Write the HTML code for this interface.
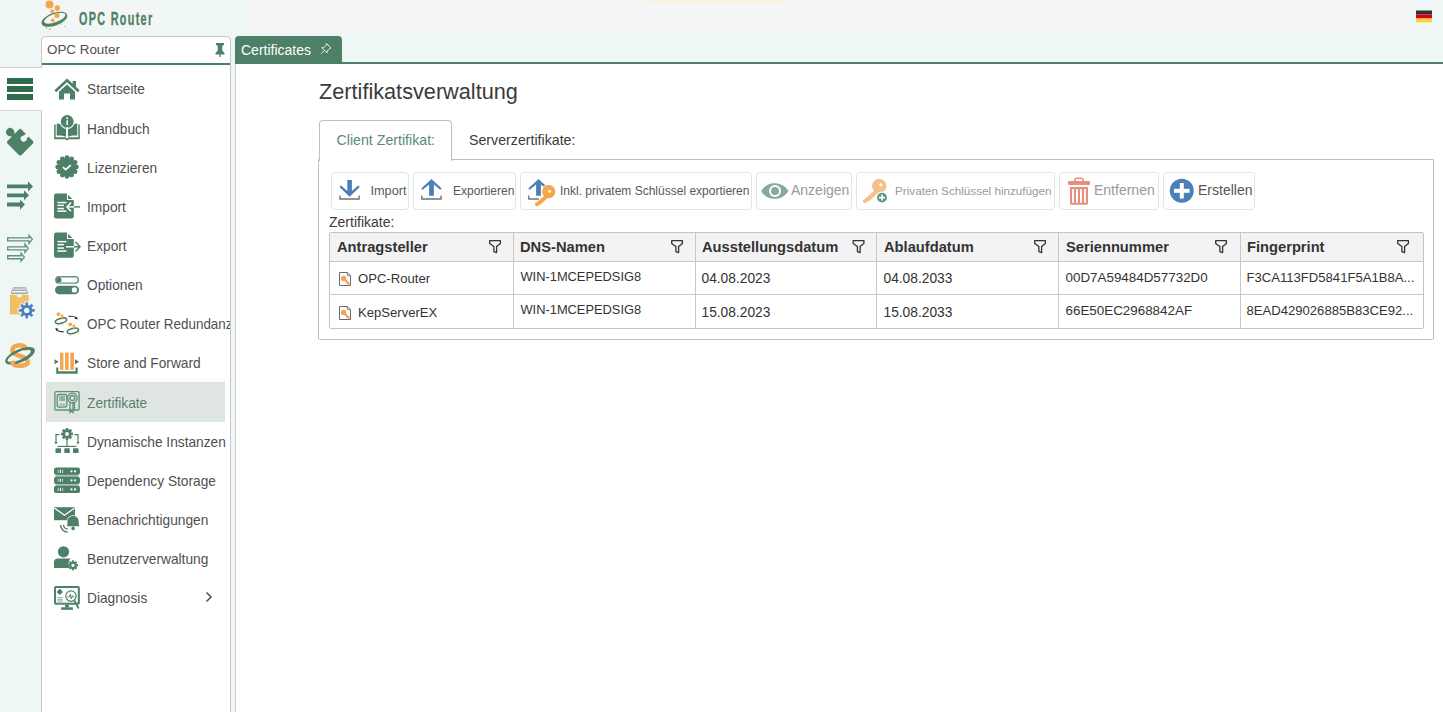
<!DOCTYPE html>
<html><head><meta charset="utf-8">
<style>
*{box-sizing:border-box;margin:0;padding:0}
html,body{width:1443px;height:712px;overflow:hidden;background:#fff;font-family:"Liberation Sans",sans-serif;position:relative}
.a{position:absolute}
.t{position:absolute;white-space:nowrap;line-height:1}
.mi{position:absolute;left:45px;font-size:15px;color:#505050;white-space:nowrap;line-height:1;transform:scaleX(0.915);transform-origin:0 0}
.btn{position:absolute;top:172px;height:38px;border:1px solid #dde7e4;border-radius:4px;background:#fff}
.bt{position:absolute;white-space:nowrap;line-height:1;color:#585858;top:185px;font-size:12px}
.hd{position:absolute;top:240px;font-weight:bold;font-size:14.7px;color:#333;white-space:nowrap;line-height:1}
.cell{position:absolute;font-size:14px;color:#333;white-space:nowrap;line-height:1}
.vl{position:absolute;top:233px;width:1px;height:95px;background:#c8c8c8}
svg{position:absolute}
</style></head><body>
<!-- header -->
<div class="a" style="left:0;top:0;width:1443px;height:62px;background:#eff7f6"></div>
<div class="a" style="left:0;top:62px;width:42px;height:6px;background:#eff7f6"></div>
<div class="a" style="left:230px;top:36px;width:6px;height:676px;background:#eff7f6"></div>
<div class="a" style="left:250px;top:0;width:1157px;height:33px;background:#f5f5f5"></div>
<div class="a" style="left:40px;top:5px;width:123px;height:22px;background:#f4f5f5"></div>
<div class="a" style="left:645px;top:0;width:145px;height:2px;background:#fcf0de"></div>
<div class="t" style="left:79px;top:9.5px;font-size:18px;font-weight:bold;color:#4e7f67;transform:scaleX(0.6);transform-origin:0 0;letter-spacing:2.2px;-webkit-text-stroke:0.35px #4e7f67">OPC Router</div>

<!-- left icon bar -->
<div class="a" style="left:0;top:67px;width:42px;height:645px;background:#eff7f6;border-right:1px solid #cfcfcf"></div>
<div class="a" style="left:0;top:67px;width:42px;height:1px;background:#cfcfcf"></div>
<div class="a" style="left:0;top:68px;width:43px;height:42px;background:#fff"></div>
<div class="a" style="left:0;top:110px;width:42px;height:1px;background:#d5d5d5"></div>

<!-- panel -->
<div class="a" style="left:41px;top:36px;width:190px;height:690px;border:1px solid #c8c8c8;border-radius:4px 4px 0 0;background:#fff;overflow:hidden">
  <div class="a" style="left:0;top:26px;width:189px;height:2px;background:#4e7f67"></div>
  <div class="t" style="left:5px;top:5.5px;font-size:13.4px;color:#505050">OPC Router</div>
  <div class="a" style="left:4px;top:345px;width:179px;height:39.5px;background:#dfe6e2"></div>
  <div class="mi" style="top:43.5px">Startseite</div>
  <div class="mi" style="top:83.5px">Handbuch</div>
  <div class="mi" style="top:122.5px">Lizenzieren</div>
  <div class="mi" style="top:161.5px">Import</div>
  <div class="mi" style="top:200.5px">Export</div>
  <div class="mi" style="top:239.5px">Optionen</div>
  <div class="mi" style="top:278.5px;transform:scaleX(0.895)">OPC Router Redundanz</div>
  <div class="mi" style="top:317.5px">Store and Forward</div>
  <div class="mi" style="top:357.5px;color:#5b7f6f">Zertifikate</div>
  <div class="mi" style="top:396.5px">Dynamische Instanzen</div>
  <div class="mi" style="top:435.5px">Dependency Storage</div>
  <div class="mi" style="top:474.5px">Benachrichtigungen</div>
  <div class="mi" style="top:513.5px">Benutzerverwaltung</div>
  <div class="mi" style="top:552.5px">Diagnosis</div>
</div>
<div class="a" style="left:41px;top:68px;width:2px;height:42px;background:#fff"></div>

<!-- content -->
<div class="a" style="left:235px;top:62px;width:1208px;height:2px;background:#4e7f67"></div>
<div class="a" style="left:235px;top:64px;width:1px;height:648px;background:#cdcdcd"></div>
<div class="a" style="left:235px;top:36px;width:107px;height:27px;background:#4e7f67;border-radius:4px 4px 0 0"></div>
<div class="t" style="left:241px;top:43px;font-size:14px;color:#fff">Certificates</div>

<div class="t" style="left:319px;top:80.5px;font-size:21.7px;color:#3a3a3a">Zertifikatsverwaltung</div>

<!-- tab panel -->
<div class="a" style="left:318px;top:159px;width:1116px;height:181px;border:1px solid #bfbfbf;border-radius:0 0 2px 2px"></div>
<div class="a" style="left:319px;top:120px;width:133px;height:41px;border:1px solid #bfbfbf;border-bottom:none;border-radius:4px 4px 0 0;background:#fff"></div>
<div class="t" style="left:336.5px;top:133px;font-size:14.2px;color:#5a8a78">Client Zertifikat:</div>
<div class="t" style="left:469px;top:133px;font-size:14.2px;color:#3a3a3a">Serverzertifikate:</div>

<!-- toolbar -->
<div class="btn" style="left:331px;width:78px"></div>
<div class="btn" style="left:413px;width:103px"></div>
<div class="btn" style="left:520px;width:232px"></div>
<div class="btn" style="left:756px;width:96px"></div>
<div class="btn" style="left:856px;width:199px"></div>
<div class="btn" style="left:1059px;width:100px"></div>
<div class="btn" style="left:1163px;width:92px"></div>
<div class="bt" style="left:370.5px;font-size:12.7px;top:184.5px">Import</div>
<div class="bt" style="left:453px">Exportieren</div>
<div class="bt" style="left:560px">Inkl. privatem Schlüssel exportieren</div>
<div class="bt" style="left:791px;top:183px;font-size:14px;color:#9a9a9a">Anzeigen</div>
<div class="bt" style="left:895px;font-size:11.7px;color:#9a9a9a">Privaten Schlüssel hinzufügen</div>
<div class="bt" style="left:1094px;top:183px;font-size:14px;color:#9a9a9a">Entfernen</div>
<div class="bt" style="left:1198px;top:183px;font-size:14px;color:#555">Erstellen</div>

<div class="t" style="left:329px;top:215.3px;font-size:14px;color:#3a3a3a">Zertifikate:</div>

<!-- table -->
<div class="a" style="left:329px;top:232px;width:1095px;height:97px;border:1px solid #c4c4c4;border-radius:2px;background:#fff"></div>
<div class="a" style="left:330px;top:233px;width:1093px;height:28px;background:#f3f3f3"></div>
<div class="a" style="left:330px;top:261px;width:1093px;height:1px;background:#c8c8c8"></div>
<div class="a" style="left:330px;top:294px;width:1093px;height:1px;background:#c8c8c8"></div>
<div class="vl" style="left:513px"></div>
<div class="vl" style="left:695px"></div>
<div class="vl" style="left:876px"></div>
<div class="vl" style="left:1058px"></div>
<div class="vl" style="left:1240px"></div>

<div class="hd" style="left:337px">Antragsteller</div>
<div class="hd" style="left:520px">DNS-Namen</div>
<div class="hd" style="left:702px">Ausstellungsdatum</div>
<div class="hd" style="left:884px">Ablaufdatum</div>
<div class="hd" style="left:1066px">Seriennummer</div>
<div class="hd" style="left:1247px">Fingerprint</div>

<div class="cell" style="left:358px;top:272px;font-size:13.1px">OPC-Router</div>
<div class="cell" style="left:358px;top:306px;font-size:13.1px">KepServerEX</div>
<div class="cell" style="left:520.5px;top:270.5px;font-size:12.85px">WIN-1MCEPEDSIG8</div>
<div class="cell" style="left:520.5px;top:303.5px;font-size:12.85px">WIN-1MCEPEDSIG8</div>
<div class="cell" style="left:701.5px;top:272px;font-size:13.75px">04.08.2023</div>
<div class="cell" style="left:701.5px;top:306px;font-size:13.75px">15.08.2023</div>
<div class="cell" style="left:883.5px;top:272px;font-size:13.75px">04.08.2033</div>
<div class="cell" style="left:883.5px;top:306px;font-size:13.75px">15.08.2033</div>
<div class="cell" style="left:1065.5px;top:271px;font-size:13.4px">00D7A59484D57732D0</div>
<div class="cell" style="left:1065.5px;top:304px;font-size:13.4px">66E50EC2968842AF</div>
<div class="cell" style="left:1246.5px;top:271px;font-size:13.1px">F3CA113FD5841F5A1B8A...</div>
<div class="cell" style="left:1246.5px;top:304px;font-size:13.1px">8EAD429026885B83CE92...</div>
<svg class="a" style="left:0;top:0" width="1443" height="712" viewBox="0 0 1443 712">

<!-- top logo -->
<g>
<g transform="rotate(-20 54.3 19)"><path d="M40.8,19.3 A13.5,6.4 0 1 0 67.8,19.3 A13.5,6.4 0 1 0 40.8,19.3 Z M43.6,18.4 A11.4,4.1 0 1 0 66.4,18.4 A11.4,4.1 0 1 0 43.6,18.4 Z" fill="#4e7f67" fill-rule="evenodd"/></g>
<circle cx="49.5" cy="4.5" r="4" fill="#f5a54a"/>
<circle cx="57.3" cy="8" r="2.8" fill="#f5a54a"/>
<circle cx="52.3" cy="11.2" r="1.9" fill="#f5a54a"/>
<circle cx="57" cy="15.5" r="2.5" fill="#f5a54a"/>
<circle cx="52.7" cy="20.2" r="1.8" fill="#f5a54a"/>
<circle cx="46.5" cy="27.5" r="0.9" fill="#f5a54a"/>
<circle cx="49.8" cy="29.2" r="0.9" fill="#f5a54a"/>
<circle cx="58" cy="24.5" r="0.8" fill="#f5a54a"/>
<circle cx="61.5" cy="24" r="0.7" fill="#f5a54a"/>
<circle cx="65" cy="26.5" r="0.7" fill="#f5a54a"/>
</g>
<!-- flag -->
<rect x="1416" y="10.5" width="16" height="4" fill="#333"/>
<rect x="1416" y="14.5" width="16" height="4" fill="#d9001e"/>
<rect x="1416" y="18.5" width="16" height="4" fill="#ffd23f"/>

<!-- left bar -->
<rect x="7" y="78" width="26" height="6" fill="#2f6b4d"/>
<rect x="7" y="86" width="26" height="6" fill="#2f6b4d"/>
<rect x="7" y="94" width="26" height="6" fill="#2f6b4d"/>
<!-- puzzle -->
<g transform="translate(20.2,142.2) rotate(45)" fill="#4e7f67">
<rect x="-9.9" y="-9.9" width="19.8" height="19.8" rx="1.8"/>
<circle cx="-14.2" cy="0" r="4.1"/>
<rect x="-12" y="-2" width="3" height="4"/>
</g>
<g transform="translate(20.2,142.2) rotate(45)" fill="#eff7f6">
<circle cx="0" cy="-5.0" r="3.1"/>
<rect x="-2" y="-11" width="4" height="6"/>
</g>
<!-- filled arrows -->
<g fill="#4e7f67">
<path d="M7,184.5 H28 V181.3 L33,186.4 L28,191.5 V188.3 H7 Z"/>
<path d="M7,193.4 H24 V190.3 L29,195.3 L24,200.3 V197.2 H7 Z"/>
<path d="M7,202.6 H20 V199.5 L24.9,204.6 L20,209.7 V206.6 H7 Z"/>
</g>
<g fill="none" stroke="#5f9079" stroke-width="1.35" stroke-linejoin="miter">
<path d="M7.7,237.85 H29 V235.3 L32.3,239.35 L29,243.4 V240.85 H7.7 Z"/>
<path d="M7.7,246.85 H25 V244.3 L28.2,248.35 L25,252.4 V249.85 H7.7 Z"/>
<path d="M7.7,255.7 H21.1 V253.1 L24.3,257.2 L21.1,261.2 V258.7 H7.7 Z"/>
</g>
<!-- box gear -->
<g>
<rect x="13" y="287.2" width="13" height="1.4" fill="#a8a8a8"/>
<rect x="12.1" y="289.6" width="14.6" height="1.4" fill="#a8a8a8"/>
<rect x="11" y="292.5" width="16.9" height="1.6" fill="#a8a8a8"/>
<path d="M12.6,288.6 V289.6 M26.4,288.6 V289.6 M11.6,291 V292.5 M27.3,291 V292.5" stroke="#888" stroke-width="0.8"/>
<path d="M9.9,294.9 H16.9 A2.5,2.5 0 0 0 21.9,294.9 H28.7 V314.6 H9.9 Z" fill="#f0c064"/>
<g transform="translate(26.75,310.4)" fill="#eff7f6"><circle r="6.8"/><rect x="-2.3" y="-9" width="4.6" height="18"/><rect x="-2.3" y="-9" width="4.6" height="18" transform="rotate(45)"/><rect x="-2.3" y="-9" width="4.6" height="18" transform="rotate(90)"/><rect x="-2.3" y="-9" width="4.6" height="18" transform="rotate(135)"/></g>
<g transform="translate(26.75,310.4)">
<circle r="5.6" fill="#4a7fc0"/>
<g fill="#4a7fc0"><rect x="-1.25" y="-8" width="2.5" height="16"/><rect x="-1.25" y="-8" width="2.5" height="16" transform="rotate(45)"/><rect x="-1.25" y="-8" width="2.5" height="16" transform="rotate(90)"/><rect x="-1.25" y="-8" width="2.5" height="16" transform="rotate(135)"/></g>
<circle r="2.7" fill="#eff7f6"/>
</g>
</g>
<!-- OPC logo S -->
<g>
<path d="M26.5,350.5 C26,346.5 22.5,345.2 19.5,345.2 C15,345.2 12.5,347.5 12.5,350 C12.5,354 17,355 21,356.3 C25,357.5 27.8,359 27.8,362 C27.8,364.5 24,365.8 20,365.8 C15.5,365.8 12.5,364 12,361" fill="none" stroke="#f5a653" stroke-width="4.6"/>
<g transform="rotate(-24 20 355.8)">
<path d="M4,355.8 A16,6.6 0 1 0 36,355.8 A16,6.6 0 1 0 4,355.8 Z M6.6,355.6 A12.6,3.9 0 1 0 31.8,355.6 A12.6,3.9 0 1 0 6.6,355.6 Z" fill="#4a8065" fill-rule="evenodd"/>
</g>
<path d="M14.5,364.8 C13,364 12.2,362.5 12,361" fill="none" stroke="#f5a653" stroke-width="4.6"/>
</g>
<!-- panel pin -->
<g fill="#4e7f67">
<path d="M216,43 H224 V45 L222.3,45.8 V50.5 L224.5,53 V54.5 H215.5 V53 L217.7,50.5 V45.8 L216,45 Z"/>
<rect x="219.4" y="54" width="1.3" height="3"/>
</g>

<!-- menu icons -->
<g fill="#4e7f67">
<!-- house -->
<path d="M55.3,91.3 L67,80.3 L78.7,91.3" fill="none" stroke="#4e7f67" stroke-width="2.6" stroke-linejoin="miter"/>
<rect x="72.6" y="81" width="3.4" height="5.5"/>
<path d="M59,91.8 L67,84.4 L75,91.8 V99.5 H70 V93.5 H64 V99.5 H59 Z"/>
<!-- book -->
<path d="M54.2,124.5 H55.7 V137.2 H65.3 L67,138.4 L68.7,137.2 H78.3 V124.5 H79.8 V139.3 H68.8 L67,140.6 L65.2,139.3 H54.2 Z"/>
<path d="M56.7,123.5 C60,123.6 63,124.3 66,126.5 V136.8 C63,135.4 60,135.3 56.7,135.5 Z"/>
<path d="M77.3,123.5 C74,123.6 71,124.3 68,126.5 V136.8 C71,135.4 74,135.3 77.3,135.5 Z"/>
<circle cx="67.2" cy="121.5" r="7.6" fill="#fff"/>
<circle cx="67.2" cy="121.5" r="6.4"/>
<rect x="66.4" y="127" width="1.6" height="10" fill="#fff"/>
<circle cx="67.2" cy="118.3" r="1" fill="#fff"/>
<rect x="66.45" y="120.2" width="1.5" height="4.8" fill="#fff"/>
<!-- badge -->
<g transform="translate(67,167)">
<circle r="9.2"/>
<g><circle cx="0" cy="-9.3" r="2.4"/><circle cx="4.65" cy="-8.05" r="2.4"/><circle cx="8.05" cy="-4.65" r="2.4"/><circle cx="9.3" cy="0" r="2.4"/><circle cx="8.05" cy="4.65" r="2.4"/><circle cx="4.65" cy="8.05" r="2.4"/><circle cx="0" cy="9.3" r="2.4"/><circle cx="-4.65" cy="8.05" r="2.4"/><circle cx="-8.05" cy="4.65" r="2.4"/><circle cx="-9.3" cy="0" r="2.4"/><circle cx="-8.05" cy="-4.65" r="2.4"/><circle cx="-4.65" cy="-8.05" r="2.4"/></g>
<path d="M-4,0.2 L-1.3,2.6 L3.8,-1.8" fill="none" stroke="#fff" stroke-width="1.7"/>
</g>
<!-- import doc -->
<path d="M56,193.4 H66.7 L73.8,200.5 V216.5 A2,2 0 0 1 71.8,218.5 H56 A2,2 0 0 1 54,216.5 V195.4 A2,2 0 0 1 56,193.4 Z"/>
<path d="M67.5,193.4 V199.5 H73.8" fill="none" stroke="#fff" stroke-width="1.1"/>
<g fill="#fff"><rect x="57.4" y="201.8" width="9" height="1.5"/><rect x="57.4" y="204.6" width="6.5" height="1.5"/><rect x="57.4" y="207.8" width="6.5" height="1.5"/><rect x="57.4" y="210.4" width="9" height="1.5"/></g>
<path d="M67.5,206.9 H74" stroke="#fff" stroke-width="1.5"/>
<path d="M74,206.9 H80" stroke="#4e7f67" stroke-width="1.5"/>
<path d="M71,202.5 L67,206.9 L71,211.3" fill="none" stroke="#fff" stroke-width="1.5"/>
<!-- export doc -->
<path d="M56,232.4 H66.7 L73.8,239.5 V255.8 A2,2 0 0 1 71.8,257.8 H56 A2,2 0 0 1 54,255.8 V234.4 A2,2 0 0 1 56,232.4 Z"/>
<path d="M67.5,232.4 V238.5 H73.8" fill="none" stroke="#fff" stroke-width="1.1"/>
<g fill="#fff"><rect x="57.4" y="240.9" width="9" height="1.5"/><rect x="57.4" y="243.9" width="6.5" height="1.5"/><rect x="57.4" y="247.3" width="6.5" height="1.5"/><rect x="57.4" y="250.3" width="9" height="1.5"/></g>
<path d="M66,246.8 H74" stroke="#fff" stroke-width="1.5"/>
<path d="M74,246.8 H79" stroke="#4e7f67" stroke-width="1.5"/>
<path d="M75.5,242 L80,246.8 L75.5,251.6" fill="none" stroke="#4e7f67" stroke-width="1.5"/>
<!-- toggles -->
<rect x="55.8" y="276.8" width="22.5" height="6.3" rx="3.15" fill="none" stroke="#4e7f67" stroke-width="1.4" opacity="0.85"/>
<circle cx="58.9" cy="279.9" r="2.6"/>
<rect x="55" y="285.7" width="24" height="8.5" rx="4.25"/>
<circle cx="74.4" cy="289.9" r="2.6" fill="#fff"/>
</g>
<!-- redundanz -->
<g>
<ellipse cx="61" cy="320.8" rx="5.8" ry="2.4" transform="rotate(-15 61 320.8)" fill="none" stroke="#4a7f64" stroke-width="1.6"/>
<circle cx="58.4" cy="314.2" r="1.9" fill="#f5a54a"/><circle cx="62.1" cy="316" r="1.4" fill="#f5a54a"/><rect x="61.4" y="316" width="1.4" height="3.5" fill="#f5a54a"/>
<circle cx="58" cy="325.5" r="0.5" fill="#f5a54a"/><circle cx="63" cy="324.8" r="0.5" fill="#f5a54a"/><circle cx="66.5" cy="323.5" r="0.5" fill="#f5a54a"/>
<ellipse cx="72.9" cy="330.9" rx="5.8" ry="2.4" transform="rotate(-15 72.9 330.9)" fill="none" stroke="#4a7f64" stroke-width="1.6"/>
<circle cx="70.2" cy="324.3" r="1.9" fill="#f5a54a"/><circle cx="73.9" cy="326" r="1.4" fill="#f5a54a"/><rect x="73.2" y="326" width="1.4" height="3.5" fill="#f5a54a"/>
<circle cx="70" cy="335.5" r="0.5" fill="#f5a54a"/><circle cx="75" cy="334.8" r="0.5" fill="#f5a54a"/><circle cx="78.5" cy="333.5" r="0.5" fill="#f5a54a"/>
<path d="M68.5,316.4 C71.5,316 74.5,316.5 76.3,317.8" fill="none" stroke="#333" stroke-width="1.1"/>
<path d="M77.8,319.2 L74.6,318.9 L76.8,316.4 Z" fill="#222"/>
<path d="M63.8,331.8 C60.8,332 57.8,331 56.4,329.6" fill="none" stroke="#333" stroke-width="1.1"/>
<path d="M55.2,328.2 L58.2,328.6 L56.4,330.9 Z" fill="#222"/>
</g>
<!-- store and forward -->
<g>
<rect x="60" y="352.6" width="3.4" height="17.3" fill="#f5a54a"/>
<rect x="65.1" y="352.6" width="3.6" height="17.3" fill="#f5a54a"/>
<rect x="70.3" y="352.6" width="3.6" height="17.3" fill="#f5a54a"/>
<path d="M56.2,367.4 H58.3 V371.3 H75.5 V367.4 H77.7 V373.7 H56.2 Z" fill="#4e7f67"/>
<path d="M54.5,359.2 L58.7,361.7 L54.5,364.2 Z" fill="#4e7f67"/>
<path d="M75,359.2 L79.2,361.7 L75,364.2 Z" fill="#4e7f67"/>
</g>
<!-- certificate (selected) -->
<g fill="none" stroke="#5f8f79" stroke-width="1.3">
<rect x="54.9" y="391.7" width="24.2" height="18.3" rx="1.2"/>
<rect x="57.2" y="394.5" width="9.6" height="12.6" rx="2"/>
<circle cx="72.4" cy="398" r="4.8"/>
<circle cx="72.4" cy="398" r="2.5"/>
<path d="M70,402 V412.5 L71.5,411 L73,412.5 V402" />
<path d="M74.5,402 V409" />
</g>
<rect x="59.2" y="396" width="5.8" height="5" fill="#8fb0a2"/>
<path d="M59,405.5 L61,403 L62.5,404.5 L64,403.5 L66,405.5 Z" fill="#8fb0a2"/>
<!-- dynamische instanzen -->
<g fill="#4e7f67">
<g transform="translate(67,434)">
<circle r="4.3"/>
<g><rect x="-1.4" y="-5.9" width="2.8" height="11.8"/><rect x="-1.4" y="-5.9" width="2.8" height="11.8" transform="rotate(45)"/><rect x="-1.4" y="-5.9" width="2.8" height="11.8" transform="rotate(90)"/><rect x="-1.4" y="-5.9" width="2.8" height="11.8" transform="rotate(135)"/></g>
<circle r="1.9" fill="#fff"/>
</g>
<path d="M59.5,434.7 H56 V443" fill="none" stroke="#4e7f67" stroke-width="1.2"/>
<path d="M74.5,434.7 H78 V443" fill="none" stroke="#4e7f67" stroke-width="1.2"/>
<path d="M54.3,442 L56,444.5 L57.7,442 Z"/><path d="M76.3,442 L78,444.5 L79.7,442 Z"/>
<rect x="66.4" y="439" width="1.2" height="7.5"/>
<rect x="57.5" y="445.8" width="19" height="1.2"/>
<rect x="55.5" y="448.3" width="5.5" height="4.7" rx="0.6"/>
<rect x="64.3" y="448.3" width="5.5" height="4.7" rx="0.6"/>
<rect x="73" y="448.3" width="5.5" height="4.7" rx="0.6"/>
</g>
<!-- dependency storage -->
<rect x="55.5" y="473" width="23" height="15" fill="#a5c2b5"/>
<g fill="#4e7f67">
<rect x="54" y="467.6" width="26" height="7.2" rx="2.2"/>
<rect x="54" y="476.7" width="26" height="7.2" rx="2.2"/>
<rect x="54" y="485.7" width="26" height="7.4" rx="2.2"/>
</g>
<g fill="#fff">
<rect x="57.7" y="469.7" width="1.1" height="3.2" opacity="0.6"/><rect x="59.9" y="469.7" width="1.1" height="3.2"/><rect x="62.1" y="469.7" width="1.1" height="3.2" opacity="0.6"/>
<circle cx="71.5" cy="471.3" r="1.1"/><circle cx="75" cy="471.3" r="1.1"/>
<rect x="57.7" y="478.7" width="1.1" height="3.2" opacity="0.6"/><rect x="59.9" y="478.7" width="1.1" height="3.2"/><rect x="62.1" y="478.7" width="1.1" height="3.2" opacity="0.6"/>
<circle cx="71.5" cy="480.3" r="1.1"/><circle cx="75" cy="480.3" r="1.1"/>
<rect x="57.7" y="487.8" width="1.1" height="3.2" opacity="0.6"/><rect x="59.9" y="487.8" width="1.1" height="3.2"/><rect x="62.1" y="487.8" width="1.1" height="3.2" opacity="0.6"/>
<circle cx="71.5" cy="489.4" r="1.1"/><circle cx="75" cy="489.4" r="1.1"/>
</g>
<!-- benachrichtigungen -->
<g fill="#4e7f67">
<rect x="54" y="507.2" width="21" height="13"/>
<path d="M54.3,508 L64.5,515.2 L74.7,508" fill="none" stroke="#fff" stroke-width="1.3"/>
<path d="M73.1,516 C69.6,516 67.4,518.5 67.4,522 V525 L66.6,526.2 H79.8 L78.8,525 V522 C78.8,518.5 76.6,516 73.1,516 Z" stroke="#fff" stroke-width="1.6"/>
<path d="M73.1,516 C69.6,516 67.4,518.5 67.4,522 V525 L66.6,526.2 H79.8 L78.8,525 V522 C78.8,518.5 76.6,516 73.1,516 Z"/>
<circle cx="73.1" cy="528.4" r="1.8"/>
<path d="M60.6,525 A7,7 0 0 0 67.6,532" fill="none" stroke="#4e7f67" stroke-width="1.4"/>
<path d="M63.6,525 A4,4 0 0 0 67.6,529" fill="none" stroke="#4e7f67" stroke-width="1.4"/>
</g>
<!-- benutzer -->
<g fill="#4e7f67">
<circle cx="63.5" cy="551.8" r="5.6"/>
<path d="M58,558.5 H70.5 C68,561 68,566 70,568 H54 V562.5 A4,4 0 0 1 58,558.5 Z"/>
<g transform="translate(73,565.3)">
<circle r="3.6"/>
<g><rect x="-1.1" y="-5" width="2.2" height="10"/><rect x="-1.1" y="-5" width="2.2" height="10" transform="rotate(45)"/><rect x="-1.1" y="-5" width="2.2" height="10" transform="rotate(90)"/><rect x="-1.1" y="-5" width="2.2" height="10" transform="rotate(135)"/></g>
<circle r="1.6" fill="#fff"/>
</g>
</g>
<!-- diagnosis -->
<g>
<rect x="55.05" y="587" width="23.8" height="16.8" rx="0.8" fill="none" stroke="#4e7f67" stroke-width="2"/>
<rect x="65.1" y="604.5" width="3.8" height="3" fill="#4e7f67"/>
<rect x="61.1" y="607.3" width="11.8" height="2.5" fill="#4e7f67"/>
<g transform="translate(59.8,591.9)" fill="#4e7f67"><circle r="2.2"/><circle cx="0" cy="-1.6" r="1.2"/><circle cx="1.6" cy="0" r="1.2"/><circle cx="0" cy="1.6" r="1.2"/><circle cx="-1.6" cy="0" r="1.2"/></g>
<rect x="57.3" y="597" width="5.5" height="1.2" fill="#9dbcaf"/><rect x="57.3" y="598.9" width="5.5" height="1.2" fill="#9dbcaf"/><rect x="57.3" y="600.4" width="5.5" height="1.2" fill="#9dbcaf"/><rect x="57.3" y="602" width="11" height="1.2" fill="#b5cdc3"/>
<circle cx="71" cy="596.1" r="5.2" fill="#fff" stroke="#4e7f67" stroke-width="1.2"/>
<path d="M67.5,597 H69.3 L70.2,594.2 L71.3,599 L72.3,595.5 L73,597 H74.5" fill="none" stroke="#4e7f67" stroke-width="0.9"/>
<path d="M74.8,601.3 L78.3,607.8" stroke="#4e7f67" stroke-width="1.8" stroke-linecap="round"/>
</g>
<path d="M206.5,592.5 L211,597 L206.5,601.5" fill="none" stroke="#555" stroke-width="1.6"/>

<!-- tab pin outline -->
<g fill="none" stroke="#fff" stroke-width="1" opacity="0.9">
<path d="M326.5,43.5 L331,48 L329.5,48.7 L327,51.2 L327.2,53 L321.8,47.6 L323.6,47.8 L326.1,45.3 Z"/>
<path d="M324,50.8 L321,53.8"/>
</g>

<!-- toolbar icons -->
<!-- import -->
<g>
<path d="M347.3,179.9 H351.9 V191 L357.6,186 C358.6,185.3 359.9,186.3 359.2,187.4 L349.6,196.8 L340,187.4 C339.3,186.3 340.6,185.3 341.6,186 L347.3,191 Z" fill="#4a7fb8"/>
<path d="M339.9,195.5 V199 H359.1 V195.5" fill="none" stroke="#707070" stroke-width="1.3"/>
</g>
<!-- export -->
<g>
<path d="M429.1,195.7 V184.5 L423.4,189.3 C422.4,190 421.1,189 421.8,187.9 L431.5,178.9 L441.2,187.9 C441.9,189 440.6,190 439.6,189.3 L433.9,184.5 V195.7 Z" fill="#4a7fb8"/>
<path d="M421.8,195.5 V199 H441 V195.5" fill="none" stroke="#707070" stroke-width="1.3"/>
</g>
<!-- export w key -->
<g>
<path d="M536.1,195.7 V184.5 L530.4,189.3 C529.4,190 528.1,189 528.8,187.9 L538.5,178.9 L548.2,187.9 C548.9,189 547.6,190 546.6,189.3 L540.9,184.5 V195.7 Z" fill="#4a7fb8"/>
<path d="M528.8,195.5 V199 H539" fill="none" stroke="#707070" stroke-width="1.3"/>
<g fill="#f5a54a" stroke="#fff" stroke-width="1.4">
<circle cx="548.7" cy="191.7" r="6.6"/>
<path d="M545.5,195 L535,203.5 L535.5,206 L537.5,206.2 L538.8,205 L539.8,205.2 L540.5,204 L541.5,203.8 L547.5,198 Z"/>
</g>
<g fill="#f5a54a">
<circle cx="548.7" cy="191.7" r="6.6"/>
<path d="M545.5,195 L535,203.5 L535.5,206 L537.5,206.2 L538.8,205 L539.8,205.2 L540.5,204 L541.5,203.8 L547.5,198 Z"/>
</g>
<circle cx="549.5" cy="191.3" r="1.5" fill="#fff"/>
</g>
<!-- eye -->
<g>
<path d="M761,191 C765,185 770,183.2 774.7,183.2 C779.5,183.2 784.5,185 788.5,191 C784.5,197 779.5,198.8 774.7,198.8 C770,198.8 765,197 761,191 Z" fill="#86ab99"/>
<circle cx="775" cy="191" r="6" fill="#fff"/>
<circle cx="775" cy="191" r="4" fill="#86ab99"/>
</g>
<!-- key plus -->
<g>
<g fill="#f5c08a">
<circle cx="879.2" cy="186" r="7.2"/>
<path d="M875.5,189.5 L863,200.5 L863.3,203 L865.8,203 L867,201.7 L868,201.8 L869,200.5 L870,200.4 L878.5,192.5 Z"/>
</g>
<circle cx="880.8" cy="184.8" r="1.6" fill="#fff"/>
<circle cx="882" cy="197.6" r="6" fill="#fff"/>
<circle cx="882" cy="197.6" r="4.9" fill="#5f9580"/>
<path d="M882,194.6 V200.6 M879,197.6 H885" stroke="#fff" stroke-width="1.6"/>
</g>
<!-- trash -->
<g fill="#e5907b">
<rect x="1075" y="178.3" width="8" height="4" rx="1.5" fill="none" stroke="#e5907b" stroke-width="1.6"/>
<rect x="1068" y="181" width="22" height="4.1" rx="1"/>
<path d="M1070,187 H1088 V203.3 A1.5,1.5 0 0 1 1086.5,204.8 H1071.5 A1.5,1.5 0 0 1 1070,203.3 Z"/>
</g>
<g fill="#fff"><rect x="1072.1" y="189" width="1.9" height="13.8"/><rect x="1076" y="189" width="1.9" height="13.8"/><rect x="1080" y="189" width="1.9" height="13.8"/><rect x="1084" y="189" width="1.9" height="13.8"/></g>
<!-- plus circle -->
<g>
<circle cx="1181.8" cy="190.8" r="12" fill="#4a7fb8"/>
<rect x="1179.8" y="183" width="4" height="15.6" fill="#fff"/>
<rect x="1174" y="188.8" width="15.6" height="4" fill="#fff"/>
</g>

<!-- table filters -->
<g transform="translate(489.5,240.5)"><path d="M0.2,0.1 H10.9 V2.9 L7.1,6.1 V12.1 L4.4,11.1 V6.1 L0.2,2.9 Z" fill="none" stroke="#333" stroke-width="1.3" stroke-linejoin="round"/></g>
<g transform="translate(671.5,240.5)"><path d="M0.2,0.1 H10.9 V2.9 L7.1,6.1 V12.1 L4.4,11.1 V6.1 L0.2,2.9 Z" fill="none" stroke="#333" stroke-width="1.3" stroke-linejoin="round"/></g>
<g transform="translate(853,240.5)"><path d="M0.2,0.1 H10.9 V2.9 L7.1,6.1 V12.1 L4.4,11.1 V6.1 L0.2,2.9 Z" fill="none" stroke="#333" stroke-width="1.3" stroke-linejoin="round"/></g>
<g transform="translate(1034.5,240.5)"><path d="M0.2,0.1 H10.9 V2.9 L7.1,6.1 V12.1 L4.4,11.1 V6.1 L0.2,2.9 Z" fill="none" stroke="#333" stroke-width="1.3" stroke-linejoin="round"/></g>
<g transform="translate(1215.5,240.5)"><path d="M0.2,0.1 H10.9 V2.9 L7.1,6.1 V12.1 L4.4,11.1 V6.1 L0.2,2.9 Z" fill="none" stroke="#333" stroke-width="1.3" stroke-linejoin="round"/></g>
<g transform="translate(1397.5,240.5)"><path d="M0.2,0.1 H10.9 V2.9 L7.1,6.1 V12.1 L4.4,11.1 V6.1 L0.2,2.9 Z" fill="none" stroke="#333" stroke-width="1.3" stroke-linejoin="round"/></g>
<g transform="translate(339,272)"><path d="M0.5,0.5 H8.3 L11.5,3.7 V13.5 H0.5 Z" fill="#fff" stroke="#6a6a6a" stroke-width="1"/><path d="M8.3,0.5 V3.7 H11.5" fill="none" stroke="#6a6a6a" stroke-width="0.8"/><circle cx="4.6" cy="6.4" r="2.7" fill="#f0a550"/><path d="M5.8,7.8 L9.6,11.6" stroke="#f0a550" stroke-width="2.2" stroke-linecap="round"/></g>
<g transform="translate(339,306)"><path d="M0.5,0.5 H8.3 L11.5,3.7 V13.5 H0.5 Z" fill="#fff" stroke="#6a6a6a" stroke-width="1"/><path d="M8.3,0.5 V3.7 H11.5" fill="none" stroke="#6a6a6a" stroke-width="0.8"/><circle cx="4.6" cy="6.4" r="2.7" fill="#f0a550"/><path d="M5.8,7.8 L9.6,11.6" stroke="#f0a550" stroke-width="2.2" stroke-linecap="round"/></g>
</svg>

</body></html>
